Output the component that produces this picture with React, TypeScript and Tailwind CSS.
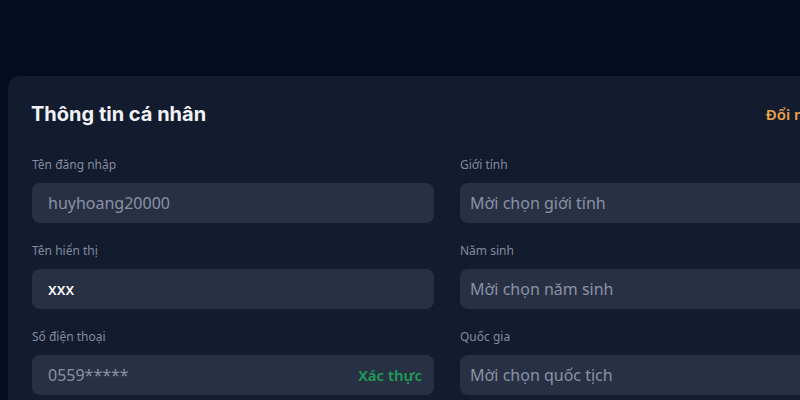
import React from 'react';

type Field = {
  label: string;
  value: string;
  filled?: boolean;
  action?: string;
};

const leftFields: Field[] = [
  { label: 'Tên đăng nhập', value: 'huyhoang20000' },
  { label: 'Tên hiển thị', value: 'xxx', filled: true },
  { label: 'Số điện thoại', value: '0559*****', action: 'Xác thực' },
];

const rightFields: Field[] = [
  { label: 'Giới tính', value: 'Mời chọn giới tính' },
  { label: 'Năm sinh', value: 'Mời chọn năm sinh' },
  { label: 'Quốc gia', value: 'Mời chọn quốc tịch' },
];

const FieldBox: React.FC<{ field: Field; select?: boolean }> = ({ field, select }) => (
  <div className="flex flex-col">
    <label className="h-4 text-[12px] leading-4 text-[#838b9e] mb-[10px]">{field.label}</label>
    <div
      className={`h-10 rounded-lg bg-[#283044] flex items-center justify-between ${select ? 'px-[10px]' : 'px-4'}`}
    >
      <span className={field.filled ? 'text-[16px] font-medium text-white' : 'text-[16px] text-[#8a92a5]'}>
        {field.value}
      </span>
      {field.action && (
        <span className="text-[15px] font-semibold text-[#1f9d55] -mr-1">{field.action}</span>
      )}
    </div>
  </div>
);

const App: React.FC = () => {
  return (
    <div
      className="w-[800px] h-[400px] overflow-hidden bg-[#050c1f] pt-[76px] pl-2"
      style={{ fontFamily: '"Noto Sans", "Open Sans", sans-serif' }}
    >
      <div className="w-[878px] h-[400px] rounded-xl bg-[#131b2e] pt-6 px-6">
        <div className="flex items-center justify-between h-7">
          <h2 className="-ml-px text-[20px] font-bold text-[#f1f3f7]" style={{ fontFamily: 'Inter, sans-serif' }}>
            Thông tin cá nhân
          </h2>
          <button className="text-[15px] font-semibold text-[#e8a44c] mr-[-2px]">Đổi mật khẩu</button>
        </div>

        <div className="grid grid-cols-2 gap-x-[26px] mt-[29px]">
          <div className="flex flex-col gap-5">
            {leftFields.map(f => (
              <FieldBox key={f.label} field={f} />
            ))}
          </div>
          <div className="flex flex-col gap-5">
            {rightFields.map(f => (
              <FieldBox key={f.label} field={f} select />
            ))}
          </div>
        </div>
      </div>
    </div>
  );
};

export default App;
